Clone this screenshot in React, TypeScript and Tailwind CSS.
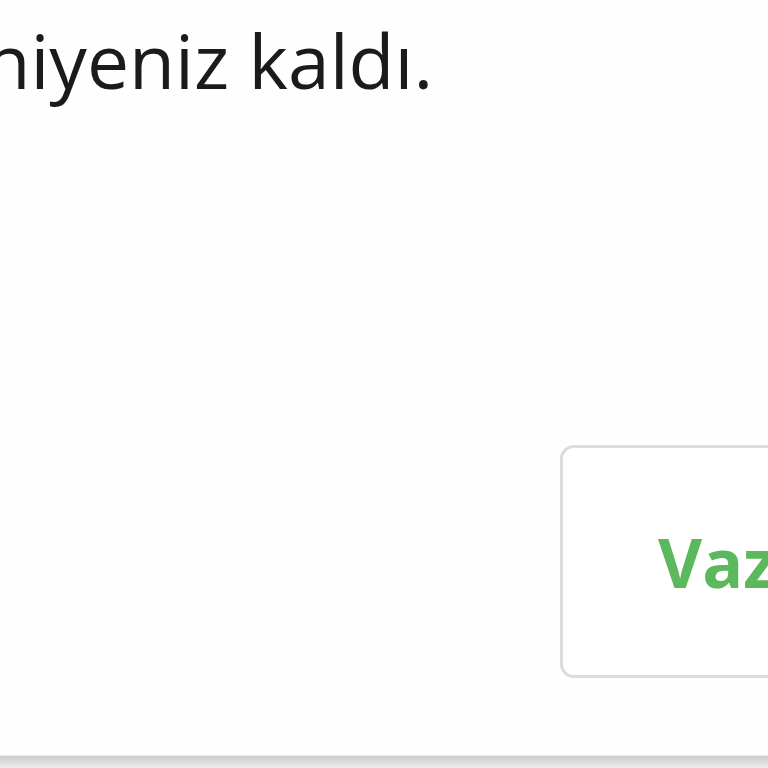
export default function App() {
  return (
    <div className="w-[768px] h-[768px] overflow-hidden bg-[#efefef] flex flex-col font-['Open_Sans',sans-serif]">
      {/* dialog body */}
      <div className="h-[755px] shrink-0 bg-[#fefefe] flex flex-col">
        <p className="mt-[9px] ml-[-93px] whitespace-nowrap text-[75px] leading-[1.362] text-[#1b1b1b]">
          saniyeniz kaldı.
        </p>
        <div className="mt-auto mb-[77px] ml-[560px] h-[233px] w-[420px] shrink-0 rounded-[14px] border-[3px] border-[#dcdcdc] bg-white flex items-center pl-[95px]">
          <span className="text-[68px] font-bold leading-none text-[#5cb85c] whitespace-nowrap">
            Vazgeç
          </span>
        </div>
      </div>
      {/* shadow strip */}
      <div className="h-[1px] bg-[#ececec]" />
      <div className="flex-1 bg-gradient-to-b from-[#cccccc] to-[#eeeeee]" />
    </div>
  );
}
